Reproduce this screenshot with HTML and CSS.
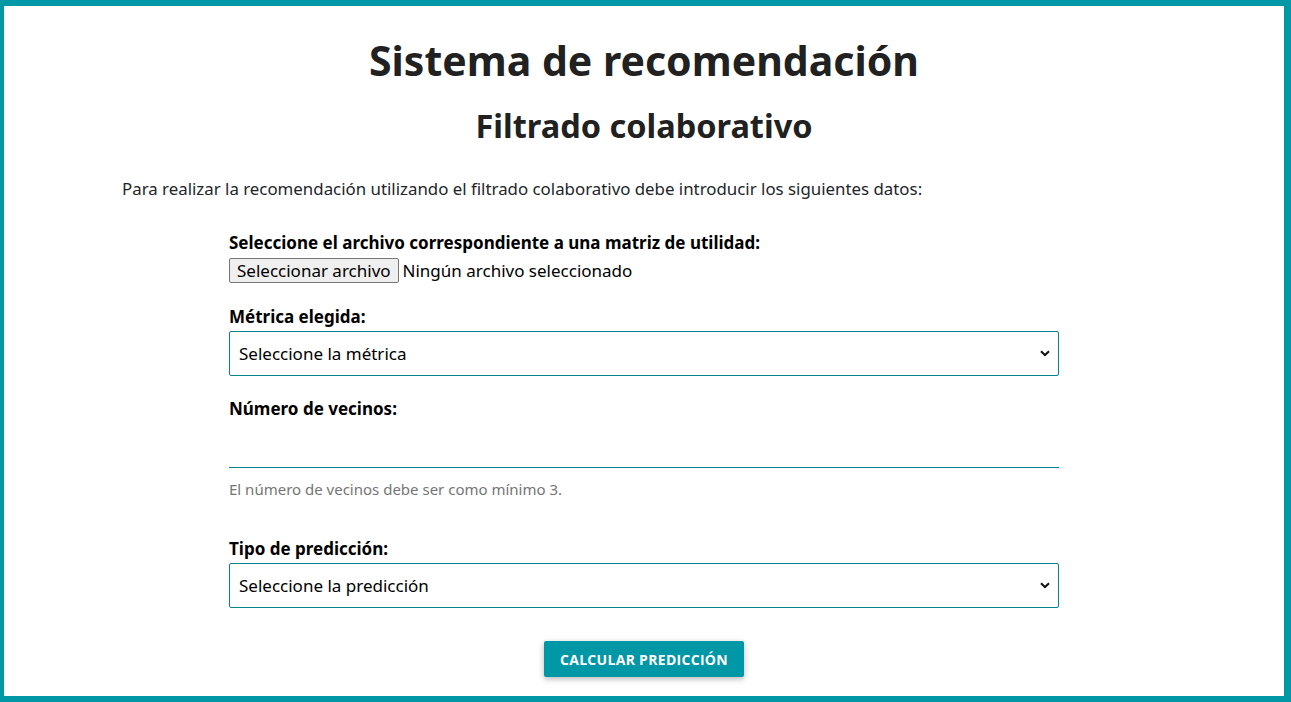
FILE: index.html
```html
<!DOCTYPE html>
<html lang="es">
<head>
<meta charset="utf-8">
<title>Sistema de recomendación</title>
<link rel="stylesheet" href="styles.css">
</head>
<body>
<main class="card">
  <h1 class="title">Sistema de recomendación</h1>
  <h2 class="subtitle">Filtrado colaborativo</h2>
  <p class="intro">Para realizar la recomendación utilizando el filtrado colaborativo debe introducir los siguientes datos:</p>
  <form class="form">
    <div class="field field-file">
      <label class="label">Seleccione el archivo correspondiente a una matriz de utilidad:</label>
      <div class="file-row">
        <span class="file-btn">Seleccionar archivo</span>
        <span class="file-name">Ningún archivo seleccionado</span>
      </div>
    </div>
    <div class="field field-metric">
      <label class="label">Métrica elegida:</label>
      <div class="select">
        <span>Seleccione la métrica</span>
        <svg class="chev" width="10" height="7" viewBox="0 0 10 7"><path d="M1 1.2 L5 5 L9 1.2" fill="none" stroke="#111" stroke-width="2"/></svg>
      </div>
    </div>
    <div class="field field-num">
      <label class="label">Número de vecinos:</label>
      <div class="line-input"></div>
      <small class="help">El número de vecinos debe ser como mínimo 3.</small>
    </div>
    <div class="field field-pred">
      <label class="label">Tipo de predicción:</label>
      <div class="select">
        <span>Seleccione la predicción</span>
        <svg class="chev" width="10" height="7" viewBox="0 0 10 7"><path d="M1 1.2 L5 5 L9 1.2" fill="none" stroke="#111" stroke-width="2"/></svg>
      </div>
    </div>
    <div class="actions">
      <button type="button" class="btn">CALCULAR PREDICCIÓN</button>
    </div>
  </form>
</main>
</body>
</html>
```
FILE: styles.css
```css
* { box-sizing: border-box; }
html, body { height: 100%; }
body {
  margin: 0;
  background: #0097a7;
  padding: 6px 7px 6px 4px;
  font-family: "Noto Sans", "Open Sans", sans-serif;
  color: #212529;
  overflow: hidden;
}
.card {
  background: #fff;
  height: 690px;
  display: flex;
  flex-direction: column;
  align-items: center;
  padding-top: 30px;
}
.title {
  margin: 0;
  font-size: 41px;
  font-weight: 700;
  line-height: 48px;
  color: #212121;
}
.subtitle {
  margin: 23px 0 0;
  font-size: 32.5px;
  font-weight: 700;
  line-height: 38px;
  color: #212121;
}
.intro {
  align-self: flex-start;
  margin: 32px 0 0 118px;
  font-size: 16.85px;
  line-height: 24px;
  color: #212529;
}
.form {
  width: 830px;
  margin-top: 30px;
  display: flex;
  flex-direction: column;
}
.field { display: flex; flex-direction: column; }
.label {
  font-weight: 700;
  font-size: 17px;
  line-height: 24px;
  color: #000;
  margin-bottom: 2px;
}
.field-file { margin-bottom: 22px; }
.file-row { display: flex; align-items: center; gap: 4px; margin-top: 1px; }
.file-btn {
  font-size: 17px;
  line-height: 21px;
  height: 25px;
  padding: 1px 7px;
  background: #efefef;
  border: 1px solid #767676;
  border-radius: 2px;
  color: #000;
}
.file-name { font-size: 17px; color: #000; }
.select {
  height: 45px;
  border: 1px solid #00838f;
  border-radius: 2px;
  display: flex;
  align-items: center;
  justify-content: space-between;
  padding: 0 8px 0 9px;
  font-size: 17px;
  color: #000;
}
.field-metric { margin-bottom: 21px; }
.line-input { height: 45px; border-bottom: 1px solid #00838f; }
.help { font-size: 15px; color: #757575; margin-top: 11px; line-height: 20px; }
.field-num { margin-bottom: 38px; }
.field-pred { margin-bottom: 33px; }
.actions { display: flex; justify-content: center; }
.btn {
  width: 200px;
  height: 36px;
  border: 0;
  border-radius: 2px;
  background: #0097a7;
  color: #fff;
  font-family: "Open Sans", "Noto Sans", sans-serif;
  font-weight: 700;
  font-size: 14px;
  letter-spacing: 0.3px;
  box-shadow: 0 2px 5px rgba(0,0,0,0.18), 0 2px 8px rgba(0,0,0,0.12);
}
```
